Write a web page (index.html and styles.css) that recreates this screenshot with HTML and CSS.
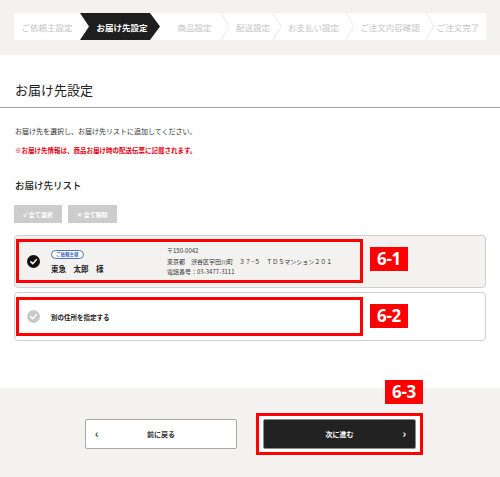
FILE: index.html
```html
<!DOCTYPE html>
<html lang="ja">
<head>
<meta charset="utf-8">
<title>お届け先設定</title>
<link rel="stylesheet" href="styles.css">
</head>
<body>
<header class="top">
  <nav class="steps">
    <div class="step s1">ご依頼主設定</div>
    <div class="step active s2">お届け先設定</div>
    <div class="step s3">商品設定<svg class="sep" viewBox="0 0 10 27"><polyline points="1,0 9,13.5 1,27"/></svg></div>
    <div class="step s4">配送設定<svg class="sep" viewBox="0 0 10 27"><polyline points="1,0 9,13.5 1,27"/></svg></div>
    <div class="step s5">お支払い設定<svg class="sep" viewBox="0 0 10 27"><polyline points="1,0 9,13.5 1,27"/></svg></div>
    <div class="step s6">ご注文内容確認<svg class="sep" viewBox="0 0 10 27"><polyline points="1,0 9,13.5 1,27"/></svg></div>
    <div class="step s7">ご注文完了</div>
  </nav>
</header>

<main class="content">
  <h1 class="title">お届け先設定</h1>
  <div class="inner">
    <p class="desc">お届け先を選択し、お届け先リストに追加してください。</p>
    <p class="note">※お届け先情報は、商品お届け時の配送伝票に記載されます。</p>
    <h2 class="subtitle">お届け先リスト</h2>
    <div class="tools">
      <button class="tool">✓ 全て選択</button>
      <button class="tool">✕ 全て解除</button>
    </div>
    <div class="cards">
      <div class="card selected">
        <span class="check on"><svg viewBox="0 0 14 14"><polyline points="4,7.2 6.2,9.3 10,5"/></svg></span>
        <div class="who">
          <span class="badge">ご依頼主様</span>
          <span class="name">東急　太郎　様</span>
        </div>
        <div class="addr">
          <div>〒150-0042</div>
          <div>東京都　渋谷区宇田川町　３７−５　ＴＤＳマンション２０１</div>
          <div>電話番号：03-3477-3111</div>
        </div>
        <span class="mark m1"></span>
        <span class="tag t1">6-1</span>
      </div>
      <div class="card other">
        <span class="check off"><svg viewBox="0 0 14 14"><polyline points="4,7.2 6.2,9.3 10,5"/></svg></span>
        <span class="other-label">別の住所を指定する</span>
        <span class="mark m2"></span>
        <span class="tag t2">6-2</span>
      </div>
    </div>
  </div>
</main>

<footer class="actions">
  <button class="btn back"><span class="arr">‹</span>前に戻る</button>
  <div class="next-wrap">
    <button class="btn next">次に進む<span class="arr">›</span></button>
    <span class="tag t3">6-3</span>
  </div>
</footer>
</body>
</html>
```

FILE: styles.css
```css
* { box-sizing: border-box; }
html, body { margin: 0; padding: 0; }
body {
  width: 500px;
  height: 477px;
  overflow: hidden;
  font-family: "Noto Sans CJK JP", "Noto Sans", sans-serif;
  color: #222;
  background: #fff;
}

/* steps */
.top {
  background: #f3f2f0;
  padding: 13px 14px 15px;
}
.steps {
  display: flex;
  height: 27px;
  background: #fff;
}
.step {
  position: relative;
  display: flex;
  align-items: center;
  justify-content: center;
  font-size: 8.5px;
  color: #c4c4c4;
  white-space: nowrap;
}
.sep {
  position: absolute;
  right: -5px;
  top: 0;
  width: 10px;
  height: 27px;
  fill: none;
  stroke: #e8e8e8;
  stroke-width: 1;
}
.s1 { width: 66px; }
.s2 { width: 80px; }
.s3 { width: 65px; }
.s4 { width: 52px; }
.s5 { width: 73px; }
.s6 { width: 80px; }
.s7 { width: 56px; }
.s3, .s4 { padding-left: 4px; }
.active {
  background: #1e1e1e;
  color: #fff;
  font-weight: 700;
  clip-path: polygon(0 0, 70px 0, 80px 50%, 70px 100%, 0 100%, 9px 50%);
  padding-left: 4px;
}

/* content */
.content {
  padding-top: 25px;
  height: 333px;
}
.title {
  margin: 0;
  padding: 0 15px 8px;
  font-size: 13px;
  line-height: 19px;
  font-weight: 400;
  border-bottom: 1px solid #a8a8a8;
}
.inner { padding: 0 14px 0 15px; }
.desc {
  margin: 17px 0 0;
  font-size: 7px;
  line-height: 12px;
  color: #333;
}
.note {
  margin: 7px 0 0;
  font-size: 6.5px;
  line-height: 12px;
  color: #e60012;
  font-weight: 700;
}
.subtitle {
  margin: 22px 0 0;
  font-size: 9.5px;
  line-height: 15px;
  font-weight: 500;
}
.tools {
  display: flex;
  gap: 6px;
  margin-top: 12px;
  margin-left: -1px;
}
.tool {
  height: 18px;
  width: 48px;
  padding: 0;
  border: 0;
  background: #cccccc;
  color: #fff;
  font-family: inherit;
  font-size: 6px;
  font-weight: 700;
}
.tool + .tool { width: 49px; }

.cards {
  margin-top: 12px;
  margin-left: -1px;
  display: flex;
  flex-direction: column;
  gap: 4px;
}
.card {
  position: relative;
  display: flex;
  align-items: center;
  border: 1px solid #cfcfcf;
  border-radius: 4px;
  padding-left: 12px;
}
.card.selected { background: #f3f2f0; height: 53px; }
.card.other { background: #fff; height: 49px; }

.check {
  width: 13px;
  height: 13px;
  border-radius: 50%;
  display: flex;
  flex: none;
}
.check svg {
  width: 13px;
  height: 13px;
  fill: none;
  stroke: #fff;
  stroke-width: 1.6;
  stroke-linecap: round;
  stroke-linejoin: round;
}
.check.on { background: #111; }
.check.off { background: #c9c9c9; }

.who {
  display: flex;
  flex-direction: column;
  align-items: flex-start;
  gap: 4px;
  margin-left: 11px;
  width: 116px;
  padding-top: 1px;
}
.badge {
  display: inline-block;
  height: 9px;
  line-height: 7px;
  padding: 0 4px;
  border: 1px solid #4a77c4;
  border-radius: 5px;
  color: #3c6bbd;
  font-size: 4.5px;
  font-weight: 700;
  background: #fff;
}
.name {
  font-size: 7.5px;
  line-height: 11px;
  font-weight: 700;
  color: #222;
}
.addr {
  font-size: 6px;
  line-height: 10.5px;
  color: #333;
  padding-top: 1px;
}

.other-label {
  margin-left: 11px;
  font-size: 6.5px;
  font-weight: 700;
  color: #222;
}

/* annotation overlays */
.mark {
  position: absolute;
  left: 1px;
  width: 347px;
  border: 3px solid #ff0000;
}
.m1 { top: 3px; height: 44px; }
.m2 { top: 4px; height: 39px; }
.tag {
  position: absolute;
  width: 38px;
  height: 24px;
  background: #ff0000;
  color: #fff;
  font-family: "Open Sans", "Liberation Sans", sans-serif;
  font-weight: 700;
  font-size: 17px;
  line-height: 24px;
  text-align: center;
  letter-spacing: -0.3px;
}
.t1 { left: 355px; top: 11px; }
.t2 { left: 355px; top: 11px; }

/* footer */
.actions {
  background: #f3f2f0;
  height: 89px;
  display: flex;
  justify-content: flex-start;
  align-items: flex-start;
  gap: 19px;
  padding-top: 31px;
  padding-left: 85px;
}
.btn {
  position: relative;
  height: 30px;
  padding: 0;
  font-family: inherit;
  font-size: 7px;
  font-weight: 700;
  border-radius: 2px;
  display: flex;
  align-items: center;
  justify-content: center;
}
.btn .arr {
  position: absolute;
  top: 50%;
  transform: translateY(-55%);
  font-size: 11px;
  font-weight: 700;
}
.back {
  width: 152px;
  background: #fff;
  color: #333;
  border: 1px solid #a9a9a9;
}
.back .arr { left: 9px; }
.next-wrap {
  position: relative;
  padding: 3px;
  border: 3px solid #ff0000;
  background: #fff;
  margin-top: -6px;
  width: 167px;
  height: 42px;
  display: flex;
  justify-content: center;
  align-items: center;
}
.next {
  width: 153px;
  background: #222;
  color: #fff;
  border: 1px solid #8a8a8a;
  flex: none;
}
.next .arr { right: 9px; }
.t3 { right: -3px; top: -36px; }
```
